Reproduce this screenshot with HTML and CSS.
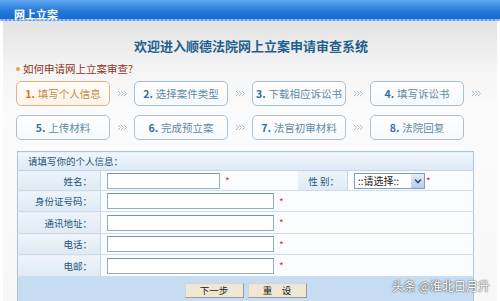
FILE: index.html
```html
<!DOCTYPE html>
<html lang="zh-CN">
<head>
    <meta charset="UTF-8">
    <title>网上立案</title>
    <link rel="stylesheet" href="styles.css">
</head>
<body>
    <div class="topbar"><span>网上立案</span></div>

    <div class="panel">
        <h1 class="title">欢迎进入顺德法院网上立案申请审查系统</h1>
        <div class="howto"><i class="dot"></i>如何申请网上立案审查?</div>

        <div class="steps">
            <div class="step current"><b>1.</b> 填写个人信息</div><div class="arrow"><svg width="10" height="7" viewBox="0 0 10 7"><path d="M1 1l2.5 2.5L1 6M4 1l2.5 2.5L4 6M7 1l2.5 2.5L7 6" fill="none" stroke="#a9bccb" stroke-width="1"/></svg></div>
            <div class="step"><b>2.</b> 选择案件类型</div><div class="arrow"><svg width="10" height="7" viewBox="0 0 10 7"><path d="M1 1l2.5 2.5L1 6M4 1l2.5 2.5L4 6M7 1l2.5 2.5L7 6" fill="none" stroke="#a9bccb" stroke-width="1"/></svg></div>
            <div class="step"><b>3.</b> 下载相应诉讼书</div><div class="arrow"><svg width="10" height="7" viewBox="0 0 10 7"><path d="M1 1l2.5 2.5L1 6M4 1l2.5 2.5L4 6M7 1l2.5 2.5L7 6" fill="none" stroke="#a9bccb" stroke-width="1"/></svg></div>
            <div class="step"><b>4.</b> 填写诉讼书</div><div class="arrow"><svg width="10" height="7" viewBox="0 0 10 7"><path d="M1 1l2.5 2.5L1 6M4 1l2.5 2.5L4 6M7 1l2.5 2.5L7 6" fill="none" stroke="#a9bccb" stroke-width="1"/></svg></div>

            <div class="step"><b>5.</b> 上传材料</div><div class="arrow"><svg width="10" height="7" viewBox="0 0 10 7"><path d="M1 1l2.5 2.5L1 6M4 1l2.5 2.5L4 6M7 1l2.5 2.5L7 6" fill="none" stroke="#a9bccb" stroke-width="1"/></svg></div>
            <div class="step"><b>6.</b> 完成预立案</div><div class="arrow"><svg width="10" height="7" viewBox="0 0 10 7"><path d="M1 1l2.5 2.5L1 6M4 1l2.5 2.5L4 6M7 1l2.5 2.5L7 6" fill="none" stroke="#a9bccb" stroke-width="1"/></svg></div>
            <div class="step"><b>7.</b> 法官初审材料</div><div class="arrow"><svg width="10" height="7" viewBox="0 0 10 7"><path d="M1 1l2.5 2.5L1 6M4 1l2.5 2.5L4 6M7 1l2.5 2.5L7 6" fill="none" stroke="#a9bccb" stroke-width="1"/></svg></div>
            <div class="step"><b>8.</b> 法院回复</div><div class="arrow"></div>
        </div>

        <table class="info">
            <colgroup>
                <col class="c-label">
                <col class="c-field">
                <col class="c-label2">
                <col class="c-field2">
            </colgroup>
            <tr class="head">
                <td colspan="4">请填写你的个人信息：</td>
            </tr>
            <tr class="r1">
                <th>姓名：</th>
                <td><input class="short" type="text"><span class="req">*</span></td>
                <th>性 别：</th>
                <td>
                    <span class="select"><span class="sel-text">::请选择::</span><span class="sel-btn"><svg width="8" height="6" viewBox="0 0 8 6"><path d="M1 1.5l3 3 3-3" fill="none" stroke="#2a4f8a" stroke-width="1.6"/></svg></span></span><span class="req">*</span>
                </td>
            </tr>
            <tr class="r2">
                <th>身份证号码：</th>
                <td colspan="3"><input class="long" type="text"><span class="req">*</span></td>
            </tr>
            <tr class="r3">
                <th>通讯地址：</th>
                <td colspan="3"><input class="long" type="text"><span class="req">*</span></td>
            </tr>
            <tr class="r4">
                <th>电话：</th>
                <td colspan="3"><input class="long" type="text"><span class="req">*</span></td>
            </tr>
            <tr class="r5">
                <th>电邮：</th>
                <td colspan="3"><input class="long" type="text"><span class="req">*</span></td>
            </tr>
            <tr class="actions">
                <td colspan="4">
                    <button type="button">下一步</button><button type="button">重　设</button>
                </td>
            </tr>
        </table>
    </div>

    <div class="watermark">头条 @淮北日月升</div>
</body>
</html>
```

FILE: styles.css
```css
body {
    margin: 0;
    width: 500px;
    height: 301px;
    overflow: hidden;
    position: relative;
    background: #fff;
    font-family: "Noto Sans CJK SC", "DejaVu Sans", sans-serif;
}
.topbar {
    height: 19px;
    background: linear-gradient(#5ea6ee, #2478d8 60%, #176bd0);
    border-bottom: 2px dotted #9cc4ea;
    padding-left: 14px;
}
.topbar span {
    color: #fff;
    font-size: 11px;
    font-weight: bold;
    line-height: 19px;
}
.panel {
    margin: 0 3px;
    height: 280px;
    background: linear-gradient(#e3e3e3, #f3f3f3 45px, #fbfbfb 90px, #f7f7f7);
    overflow: hidden;
}
.title {
    margin: 16px 0 0;
    height: 18px;
    line-height: 18px;
    text-align: center;
    font-size: 13px;
    font-weight: bold;
    color: #1f5f8c;
    padding-left: 2px;
}
.howto {
    margin: 7px 0 0 13px;
    height: 14px;
    line-height: 14px;
    font-size: 10.5px;
    color: #8e3418;
    display: flex;
    align-items: center;
}
.dot {
    width: 4px;
    height: 4px;
    border-radius: 50%;
    background: #f0a050;
    margin-right: 3px;
}
.steps {
    margin: 5px 0 0 13px;
    display: grid;
    grid-template-columns: repeat(4, 94px 24px);
    grid-auto-rows: 25px;
    row-gap: 9px;
}
.step {
    box-sizing: border-box;
    border: 1px solid #a8c0d2;
    border-radius: 5px;
    background: linear-gradient(#fff, #f6f8fa);
    font-size: 10.5px;
    color: #5f8aa6;
    display: flex;
    align-items: center;
    justify-content: center;
    white-space: nowrap;
}
.step b {
    color: #3c6c9a;
    margin-right: 3px;
}
.step.current {
    border-color: #e0b486;
    background: linear-gradient(#fffdf8, #fbf3e8);
    color: #c98a46;
}
.step.current b {
    color: #d0761c;
}
.arrow {
    display: flex;
    align-items: center;
    justify-content: center;
}
.info {
    margin: 11px 0 0 14px;
    width: 456px;
    table-layout: fixed;
    border-collapse: collapse;
    border: 1px solid #adc3d6;
    font-size: 9.5px;
    color: #24557c;
}
.c-label { width: 83px; }
.c-field { width: 197px; }
.c-label2 { width: 50px; }
.c-field2 { width: 126px; }
.info td, .info th {
    padding: 0;
    border-bottom: 1px solid #cfdbe6;
}
.info th {
    font-weight: normal;
    text-align: right;
    padding-right: 8px;
    background: linear-gradient(#edf4fa, #dfeaf4);
    border-right: 1px solid #c6d5e1;
}
.info td {
    background: #fbfcfe;
    padding-left: 6px;
}
.head td {
    height: 18px;
    padding-left: 10px;
    background: linear-gradient(#f0f6fb, #dce9f5);
    border-bottom: 1px solid #c3d4e2;
}
.r1 td, .r1 th { height: 19px; }
.r2 td, .r2 th { height: 20px; }
.r3 td, .r3 th { height: 21px; }
.r4 td, .r4 th { height: 20px; }
.r5 td, .r5 th { height: 21px; }
input {
    box-sizing: border-box;
    height: 16px;
    margin: 0;
    padding: 0;
    border: 1px solid #8fb0c2;
    border-top-color: #7596aa;
    background: #fff;
    vertical-align: middle;
}
.short { width: 113px; }
.long { width: 167px; }
.req {
    color: #c83a3a;
    font-size: 10px;
    margin-left: 5px;
    vertical-align: middle;
}
.select {
    display: inline-flex;
    box-sizing: border-box;
    width: 71px;
    height: 16px;
    border: 1px solid #7f9fb6;
    background: #fff;
    vertical-align: middle;
    align-items: center;
}
.sel-text {
    flex: 1;
    padding-left: 3px;
    font-size: 10px;
    color: #222;
    line-height: 14px;
}
.sel-btn {
    width: 13px;
    height: 14px;
    background: linear-gradient(#e4ecf8, #b9cbe6);
    display: flex;
    align-items: center;
    justify-content: center;
}
.select + .req {
    margin-left: 1px;
}
.actions td {
    height: 26px;
    padding: 0;
    text-align: center;
    background: #c5dcf2;
    border-bottom: none;
}
button {
    width: 59px;
    height: 15px;
    margin: 0 2px;
    padding: 0;
    border: 1px solid #9a9a9a;
    border-top-color: #d4d4d4;
    border-left-color: #d4d4d4;
    background: #efe6d3;
    font-family: "Noto Sans CJK SC", sans-serif;
    font-size: 9.5px;
    line-height: 13px;
    color: #222;
    vertical-align: middle;
}
.watermark {
    position: absolute;
    right: 10px;
    bottom: 7px;
    font-size: 12px;
    color: #fff;
    text-shadow: 0 0 2px #555, 0 0 1px #333;
}
```
